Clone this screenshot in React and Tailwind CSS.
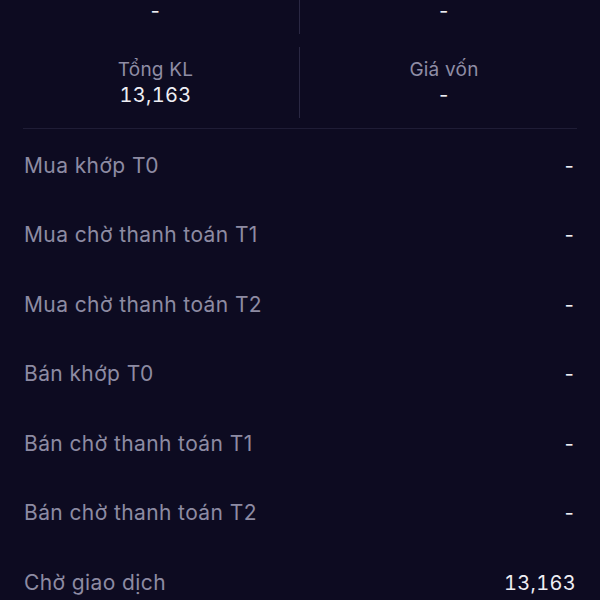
export default function App() {
  const rows = [
    ["Mua khớp T0", "-"],
    ["Mua chờ thanh toán T1", "-"],
    ["Mua chờ thanh toán T2", "-"],
    ["Bán khớp T0", "-"],
    ["Bán chờ thanh toán T1", "-"],
    ["Bán chờ thanh toán T2", "-"],
    ["Chờ giao dịch", "13,163"],
  ];
  const stats = [
    ["", "-"],
    ["", "-"],
    ["Tổng KL", "13,163"],
    ["Giá vốn", "-"],
  ];
  return (
    <div
      className="w-[600px] h-[600px] overflow-hidden bg-[#0d0b21]"
      style={{ fontFamily: "Inter, 'Noto Sans', sans-serif" }}
    >
      <div className="-mt-[37px] px-[12px] grid grid-cols-2 gap-y-[13px]">
        {stats.map(([label, value], i) => (
          <div
            key={i}
            className={`h-[71px] flex flex-col items-center justify-center ${
              i % 2 === 0 ? "border-r border-[#2a2843]" : ""
            }`}
          >
            <div className="h-[26px] text-[19px] leading-[26px] text-[#8f8da5] tracking-[0.2px]">{label}</div>
            <div className="text-[20px] leading-[25px] text-[#eeeef4] tabular-nums tracking-[0.3px]">{value}</div>
          </div>
        ))}
      </div>
      <div className="mx-[23px] mt-[10px] h-px bg-[#1f1d36]" />
      <div className="px-[24px] pt-[2px]">
        {rows.map(([label, value], i) => (
          <div key={i} className="h-[69.5px] flex items-center justify-between">
            <span className="text-[21px] leading-[28px] text-[#8d8ba3] tracking-[0.4px]">{label}</span>
            <span className="text-[20px] leading-[28px] text-[#eeeef4] tabular-nums tracking-[0.3px]">{value}</span>
          </div>
        ))}
      </div>
    </div>
  );
}
